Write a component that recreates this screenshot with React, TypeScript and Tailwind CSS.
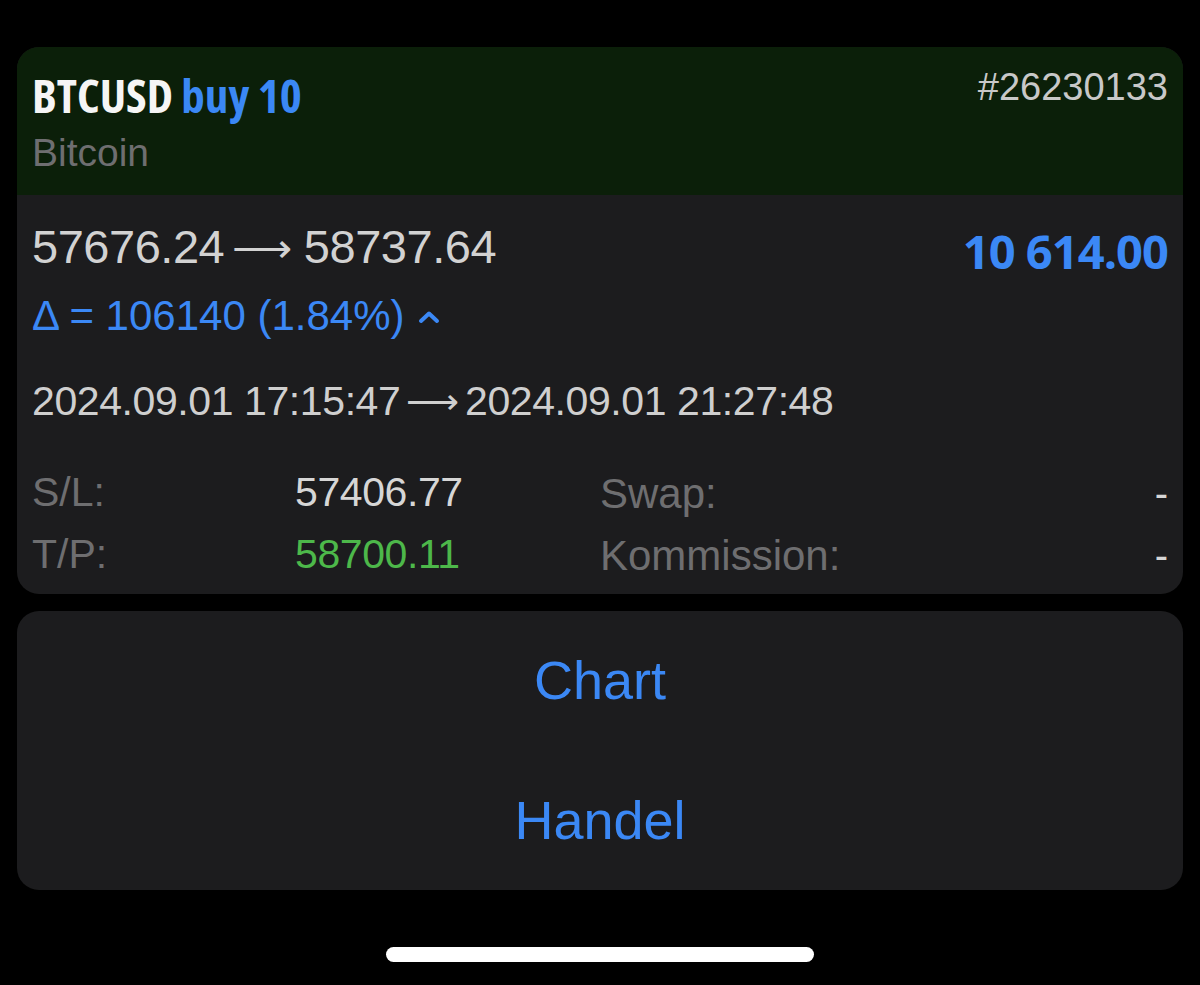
import React from "react";

const sans = "font-['Liberation_Sans',Arial,sans-serif]";
const cond = "font-['Open_Sans','DejaVu_Sans_Condensed',sans-serif] font-bold";

function Arrow({ size, cls }: { size: string; cls: string }) {
  return <span className={`font-['DejaVu_Sans',sans-serif] font-extralight ${size} ${cls}`}>⟶</span>;
}

function Chevron() {
  return (
    <svg width="22" height="14" viewBox="0 0 22 14" className="ml-[14px] mt-[4px]">
      <polyline points="3,11 11,3.5 19,11" fill="none" stroke="#3b88f5" strokeWidth="4" strokeLinecap="round" strokeLinejoin="round" />
    </svg>
  );
}

export default function App() {
  const rows = [
    { label: "S/L:", value: "57406.77", color: "text-[#d6d6d6]", label2: "Swap:" },
    { label: "T/P:", value: "58700.11", color: "text-[#4db84a]", label2: "Kommission:" },
  ];

  return (
    <div className={`min-h-screen bg-black px-[17px] pt-[47px] ${sans}`}>
      <div className="overflow-hidden rounded-[22px] bg-[#1c1c1e]">
        <div className="flex h-[148px] justify-between bg-[#0b1f09] px-[15px]">
          <div className="pt-[20px]">
            <div className={`${cond} font-stretch-condensed text-[47px] leading-[56px] text-[#f5f5f5]`}>
              BTCUSD <span className="text-[#3b88f5]">buy 10</span>
            </div>
            <div className="mt-[8px] text-[39px] leading-[44px] text-[#6e6e70]">Bitcoin</div>
          </div>
          <div className="pt-[18px] text-[38px] leading-[44px] text-[#c8c8c8]">#26230133</div>
        </div>

        <div className="px-[15px] pb-[8px] pt-[28px]">
          <div className="flex h-[48px] items-center justify-between">
            <div className="flex items-center text-[47px] tracking-[-0.01em] text-[#d2d2d2]">
              57676.24<Arrow size="text-[42px]" cls="ml-[8px] mr-[12px]" />58737.64
            </div>
            <div className={`${cond} mt-[8px] text-[47px] tracking-[-0.02em] text-[#3b88f5]`}>10 614.00</div>
          </div>
          <div className="mt-[20px] flex h-[48px] items-center text-[42px] text-[#3b88f5]">
            Δ = 106140 (1.84%)
            <Chevron />
          </div>
          <div className="mt-[39px] flex h-[48px] items-center text-[41px] tracking-[-0.01em] text-[#cfcfcf]">
            2024.09.01 17:15:47<Arrow size="text-[37px]" cls="mx-[6px]" />2024.09.01 21:27:48
          </div>
          <div className="mt-[36px] grid grid-cols-[263px_305px_1fr_auto] auto-rows-[62px] items-center">
            {rows.map((r) => (
              <React.Fragment key={r.label}>
                <div className="text-[41px] text-[#6e6e70]">{r.label}</div>
                <div className={`text-[41px] tracking-[-0.01em] ${r.color}`}>{r.value}</div>
                <div className="text-[42px] text-[#6e6e70]">{r.label2}</div>
                <div className="text-[40px] text-[#d6d6d6]">-</div>
              </React.Fragment>
            ))}
          </div>
        </div>
      </div>

      <div className="mt-[17px] grid h-[279px] grid-rows-2 rounded-[22px] bg-[#1c1c1e] text-[54px] text-[#3b88f5]">
        <button className="flex items-center justify-center">Chart</button>
        <button className="flex items-center justify-center">Handel</button>
      </div>

      <div className="mx-auto mt-[57px] h-[15px] w-[428px] rounded-full bg-white" />
    </div>
  );
}
